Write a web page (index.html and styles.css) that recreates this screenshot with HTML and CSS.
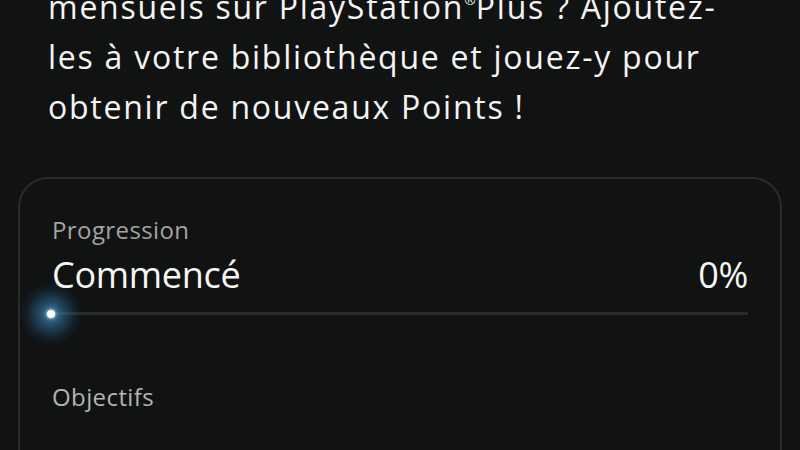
FILE: index.html
```html
<!DOCTYPE html>
<html lang="fr">
<head>
<meta charset="utf-8">
<link rel="stylesheet" href="styles.css">
</head>
<body>
<p class="intro">mensuels sur PlayStation<sup class="reg">®</sup>Plus ? Ajoutez-<br>les à votre bibliothèque et jouez-y pour<br>obtenir de nouveaux Points !</p>
<section class="card">
  <div class="label">Progression</div>
  <div class="status-row">
    <span class="status">Commencé</span>
    <span class="percent">0%</span>
  </div>
  <div class="track">
    <span class="glow"></span>
    <span class="dot"></span>
  </div>
  <div class="label objectives">Objectifs</div>
</section>
</body>
</html>
```
FILE: styles.css
```css
html, body {
  margin: 0;
  padding: 0;
  background: #111212;
  overflow: hidden;
}
body {
  width: 800px;
  height: 450px;
  font-family: "Open Sans", "Noto Sans", sans-serif;
  color: #f4f4f4;
}
.intro {
  margin: -18px 0 0 0;
  padding-left: 48px;
  font-size: 32px;
  line-height: 50px;
  letter-spacing: 1.75px;
  white-space: nowrap;
}
.reg {
  font-size: 14px;
  vertical-align: 14px;
  line-height: 0;
  letter-spacing: 0;
}
.card {
  margin: 45px 18px 0 18px;
  border: 2px solid #2a2b2d;
  border-bottom: none;
  border-radius: 30px 30px 0 0;
  padding: 36px 32px 0 32px;
  height: 273px;
  box-sizing: border-box;
}
.label {
  font-size: 24px;
  line-height: 30px;
  letter-spacing: 0.4px;
  color: #a3a3a3;
}
.status-row {
  display: flex;
  justify-content: space-between;
  align-items: baseline;
  margin-top: 8px;
  font-size: 36px;
  line-height: 44px;
  letter-spacing: -0.3px;
  color: #f6f6f6;
}
.track {
  position: relative;
  margin-top: 15px;
  height: 3px;
  background: #2a2b2c;
}
.glow {
  position: absolute;
  left: -32px;
  top: -29.5px;
  width: 62px;
  height: 62px;
  border-radius: 50%;
  background: radial-gradient(circle, rgba(80, 160, 210, 0.75) 0, rgba(50, 125, 175, 0.5) 28%, rgba(30, 85, 125, 0.2) 55%, rgba(17, 18, 18, 0) 72%);
}
.dot {
  position: absolute;
  left: -5px;
  top: -2.5px;
  width: 8px;
  height: 8px;
  border-radius: 50%;
  background: #ffffff;
  box-shadow: 0 0 3px 1px rgba(200, 230, 250, 0.7);
}
.objectives {
  margin-top: 67px;
  color: #b4b4b4;
}
```
